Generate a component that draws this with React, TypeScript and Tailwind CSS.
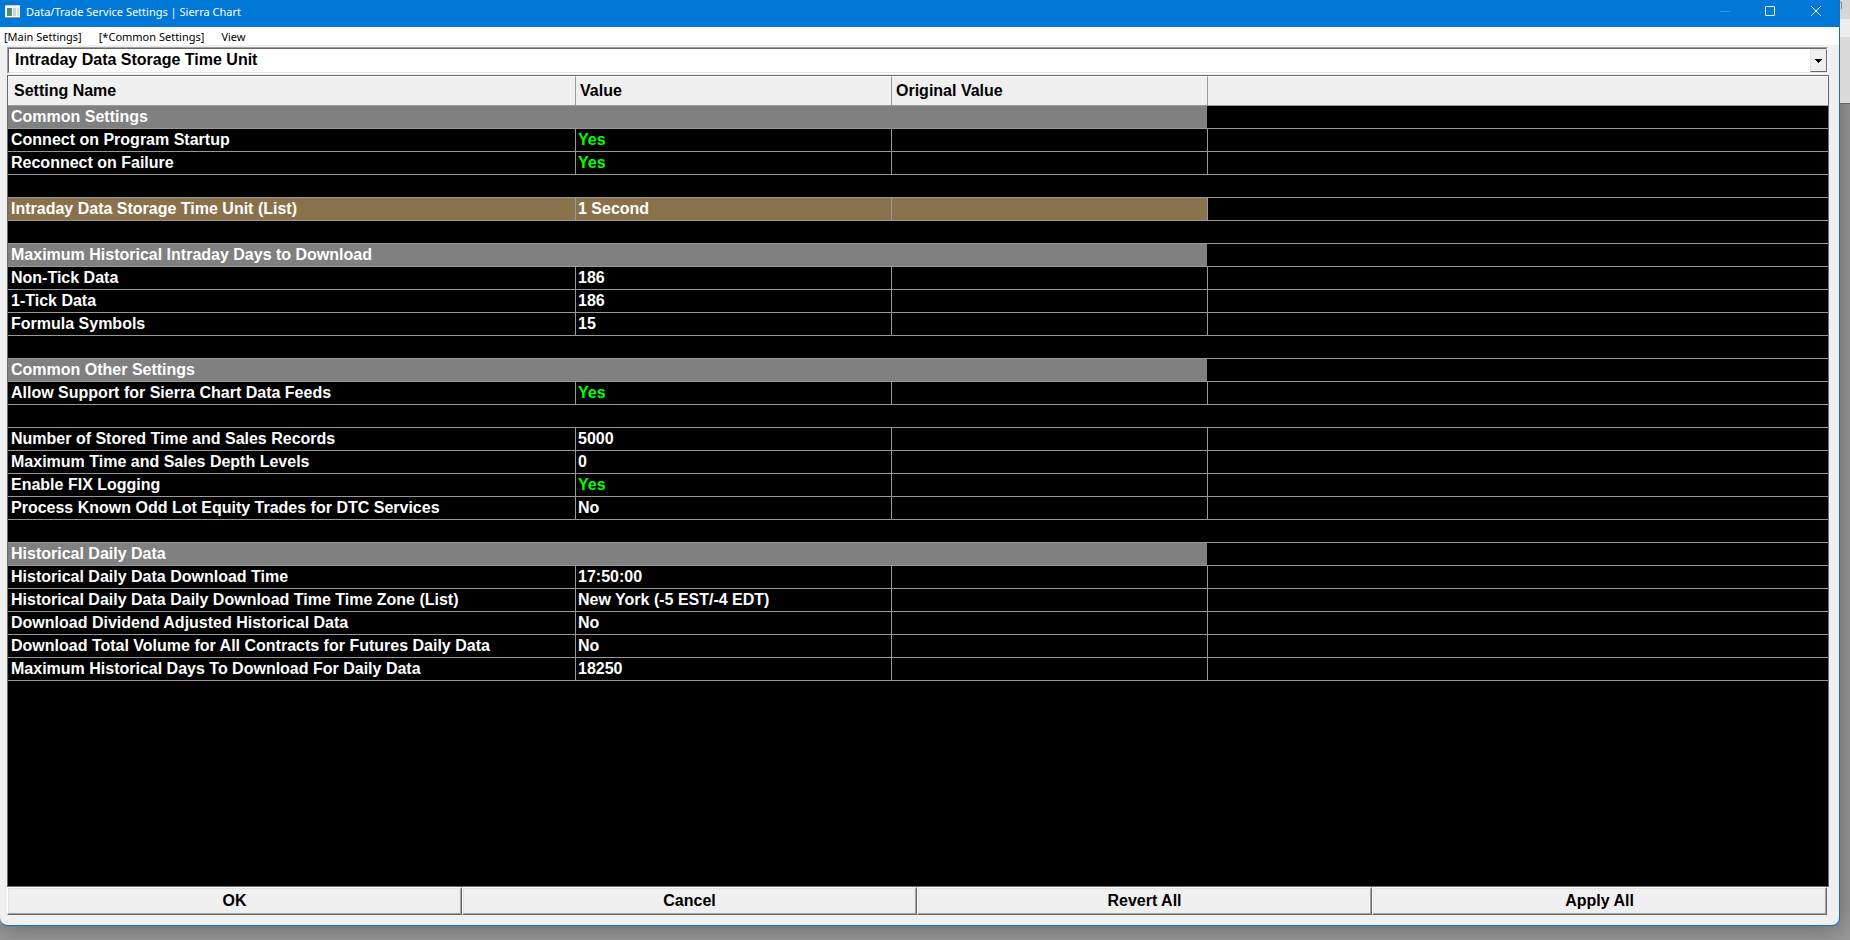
import { useState } from "react";

type Row =
  | { kind: "section"; name: string }
  | { kind: "spacer" }
  | { kind: "setting"; name: string; value: string; selected?: boolean };

const section = (name: string): Row => ({ kind: "section", name });
const setting = (name: string, value: string, selected = false): Row => ({
  kind: "setting",
  name,
  value,
  selected,
});
const spacer: Row = { kind: "spacer" };

const rows: Row[] = [
  section("Common Settings"),
  setting("Connect on Program Startup", "Yes"),
  setting("Reconnect on Failure", "Yes"),
  spacer,
  setting("Intraday Data Storage Time Unit (List)", "1 Second", true),
  spacer,
  section("Maximum Historical Intraday Days to Download"),
  setting("Non-Tick Data", "186"),
  setting("1-Tick Data", "186"),
  setting("Formula Symbols", "15"),
  spacer,
  section("Common Other Settings"),
  setting("Allow Support for Sierra Chart Data Feeds", "Yes"),
  spacer,
  setting("Number of Stored Time and Sales Records", "5000"),
  setting("Maximum Time and Sales Depth Levels", "0"),
  setting("Enable FIX Logging", "Yes"),
  setting("Process Known Odd Lot Equity Trades for DTC Services", "No"),
  spacer,
  section("Historical Daily Data"),
  setting("Historical Daily Data Download Time", "17:50:00"),
  setting("Historical Daily Data Daily Download Time Time Zone (List)", "New York (-5 EST/-4 EDT)"),
  setting("Download Dividend Adjusted Historical Data", "No"),
  setting("Download Total Volume for All Contracts for Futures Daily Data", "No"),
  setting("Maximum Historical Days To Download For Daily Data", "18250"),
];

function AppIcon() {
  return (
    <svg width="15" height="13" viewBox="0 0 15 13" shapeRendering="crispEdges" aria-hidden="true">
      <defs>
        <linearGradient id="pane" x1="0" y1="0" x2="1" y2="1">
          <stop offset="0" stopColor="#4a80a0" />
          <stop offset="1" stopColor="#4a9a6c" />
        </linearGradient>
      </defs>
      <rect width="15" height="13" fill="#f4f4f4" />
      <rect width="15" height="1" fill="#cfcfcf" />
      <rect x="2" y="3" width="5" height="8" fill="url(#pane)" />
      <rect x="8" y="3" width="3" height="8" fill="#d0d4d8" />
      <rect x="12" y="3" width="2" height="8" fill="#e0e0e0" />
      <rect y="12" width="15" height="1" fill="#9a9a9a" />
    </svg>
  );
}

function TitleBar() {
  return (
    <header className="flex h-[27px] items-center bg-[#0078d7] text-white">
      <div className="flex flex-1 items-center gap-[6px] pb-[4px] pl-[5px]">
        <AppIcon />
        <h1 className="text-[11px] leading-4">Data/Trade Service Settings | Sierra Chart</h1>
      </div>
      <div className="flex h-full pb-[5px]">
        <button type="button" aria-label="Minimize" disabled className="flex w-[45px] items-center justify-center">
          <svg width="10" height="10" viewBox="0 0 10 10" shapeRendering="crispEdges">
            <path d="M0 5.5H10" stroke="#3393df" />
          </svg>
        </button>
        <button type="button" aria-label="Maximize" className="flex w-[45px] items-center justify-center">
          <svg width="10" height="10" viewBox="0 0 10 10">
            <rect x="0.5" y="0.5" width="9" height="9" rx="0.5" fill="none" stroke="#fff" />
          </svg>
        </button>
        <button type="button" aria-label="Close" className="flex w-[47px] items-center justify-center">
          <svg width="10" height="10" viewBox="0 0 10 10">
            <path d="M0 0L10 10M10 0L0 10" stroke="#fff" />
          </svg>
        </button>
      </div>
    </header>
  );
}

function MenuBar() {
  return (
    <nav className="flex h-[18px] items-end gap-[17px] bg-white px-1 text-[11px] leading-4 text-black">
      <button type="button">[Main Settings]</button>
      <button type="button">[*Common Settings]</button>
      <button type="button">View</button>
    </nav>
  );
}

function SettingPicker() {
  return (
    <div className="mr-px grid h-[27px] border border-t-[#a0a0a0] border-r-white border-b-white border-l-[#a0a0a0]">
      <div className="col-start-1 row-start-1 border border-t-[#696969] border-r-[#e3e3e3] border-b-[#e3e3e3] border-l-[#696969] bg-white">
        <select
          aria-label="Setting"
          className="block h-[22px] w-full appearance-none bg-transparent pl-[6px] font-['Liberation_Sans',Arial,sans-serif] text-[16px] leading-5 font-bold text-black outline-none"
        >
          <option>Intraday Data Storage Time Unit</option>
        </select>
      </div>
      <span className="pointer-events-none col-start-1 row-start-1 mt-px mb-px flex w-[17px] items-center justify-center justify-self-end border border-t-[#e3e3e3] border-r-[#696969] border-b-[#696969] border-l-[#e3e3e3] bg-[#f0f0f0]">
        <svg width="7" height="4" viewBox="0 0 7 4" shapeRendering="crispEdges" aria-hidden="true">
          <path d="M0 0h7v1H0zM1 1h5v1H1zM2 2h3v1H2zM3 3h1v1H3z" fill="#000" />
        </svg>
      </span>
    </div>
  );
}

const cell = "h-[23px] border-b border-[#989898] p-0 pb-px pl-[2px]";
const head = "h-[30px] border-t border-b border-t-white border-b-[#989898] border-l-[#989898] p-0 text-left font-bold";

function SettingRow({ row }: { row: Row }) {
  if (row.kind === "spacer") {
    return (
      <tr>
        <td colSpan={4} className={cell} />
      </tr>
    );
  }
  if (row.kind === "section") {
    return (
      <tr>
        <th colSpan={3} scope="colgroup" className={`${cell} bg-[#808080] pl-[3px] text-left`}>
          {row.name}
        </th>
        <td className={cell} />
      </tr>
    );
  }
  const tint = row.selected ? "bg-[#89714b]" : "";
  return (
    <tr>
      <th scope="row" className={`${cell} ${tint} pl-[3px] text-left`}>
        {row.name}
      </th>
      <td className={`${cell} ${tint} border-l ${row.value === "Yes" ? "text-[#00ff00]" : ""}`}>{row.value}</td>
      <td className={`${cell} ${tint} border-l`} />
      <td className={`${cell} border-l`} />
    </tr>
  );
}

function SettingsTable() {
  return (
    <div className="flex-1 border border-[#696969] bg-black">
      <table className="w-full table-fixed border-separate border-spacing-0 text-[16px] leading-5 font-bold text-white">
        <colgroup>
          <col className="w-[567px]" />
          <col className="w-[316px]" />
          <col className="w-[316px]" />
          <col />
        </colgroup>
        <thead className="bg-[#f0f0f0] text-black">
          <tr>
            <th className={`${head} pl-[6px]`}>Setting Name</th>
            <th className={`${head} border-l pl-1`}>Value</th>
            <th className={`${head} border-l pl-1`}>Original Value</th>
            <th className={`${head} border-l`} aria-label="Unused" />
          </tr>
        </thead>
        <tbody>
          {rows.map((row, i) => (
            <SettingRow key={i} row={row} />
          ))}
        </tbody>
      </table>
    </div>
  );
}

function ActionBar() {
  const [active, setActive] = useState("");
  return (
    <div className="mr-[2px] grid h-[28px] grid-cols-4">
      {["OK", "Cancel", "Revert All", "Apply All"].map((label) => (
        <button
          key={label}
          type="button"
          aria-pressed={active === label}
          onClick={() => setActive(label)}
          className="border border-t-white border-r-[#696969] border-b-[#696969] border-l-white bg-[#f0f0f0] text-[16px] font-bold text-black"
        >
          <span className="flex h-full items-center justify-center border border-t-[#e3e3e3] border-r-[#a0a0a0] border-b-[#a0a0a0] border-l-[#e3e3e3]">
            {label}
          </span>
        </button>
      ))}
    </div>
  );
}

export default function App() {
  return (
    <div className="flex min-h-screen bg-[#989898] font-['Noto_Sans',sans-serif]">
      <main className="mb-[14px] flex flex-1 flex-col overflow-hidden rounded-b-lg border-r border-b border-[#0f70c0] bg-[#f0f0f0] shadow-[0_2px_24px_rgba(0,0,0,0.35)]">
        <TitleBar />
        <MenuBar />
        <div className="flex flex-1 flex-col pt-[2px] pr-[10px] pb-[10px] pl-[7px] font-['Liberation_Sans',Arial,sans-serif]">
          <SettingPicker />
          <div className="h-px" />
          <SettingsTable />
          <ActionBar />
        </div>
      </main>
      <aside className="w-[10px]" aria-hidden="true">
        <div className="h-[19px] bg-[#d6d6d6]">
          <svg width="10" height="19" viewBox="0 0 10 19">
            <path d="M0 2H1.5V9" fill="none" stroke="#8a8a8a" />
          </svg>
        </div>
        <div className="h-[18px] bg-[#ededed]" />
        <div className="h-[67px] border-b border-[#666] bg-[#dadada]" />
      </aside>
    </div>
  );
}
